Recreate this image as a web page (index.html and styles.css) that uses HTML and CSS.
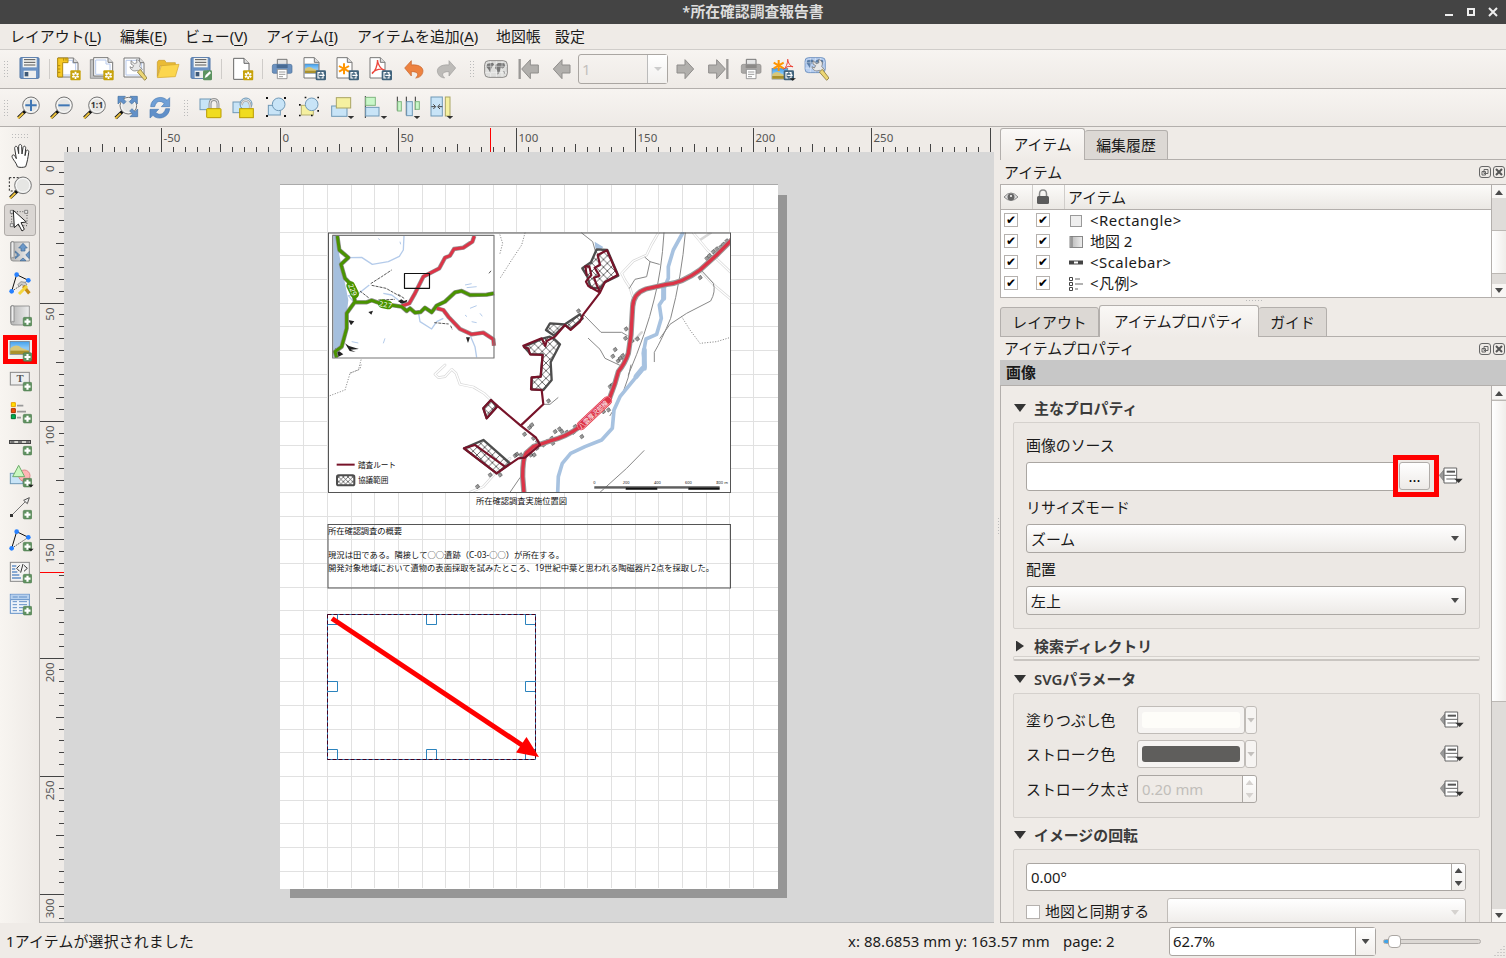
FILE: index.html
```html
<!DOCTYPE html>
<html lang="ja">
<head>
<meta charset="utf-8">
<title>*所在確認調査報告書</title>
<link rel="stylesheet" href="styles.css">
</head>
<body>
<svg class="defs" width="0" height="0" aria-hidden="true">
  <defs>
    <pattern id="hatch" width="23" height="23" patternUnits="userSpaceOnUse"><path d="M0 0L23 23M23 0L0 23" stroke="#333" stroke-width="2.200"/></pattern>
    <pattern id="hatch-fine" width="14" height="14" patternUnits="userSpaceOnUse"><path d="M0 0L14 14M14 0L0 14" stroke="#333" stroke-width="2"/></pattern>
    <linearGradient id="sheet" x1="0" x2="1"><stop offset="0" stop-color="#b5b5b5"/><stop offset="1" stop-color="#eee"/></linearGradient>
    <linearGradient id="photo" x1="0" x2="0" y1="0" y2="1"><stop offset="0" stop-color="#3f9fee"/><stop offset=".5" stop-color="#8cc8f4"/></linearGradient>
  </defs>
  <symbol id="star-badge" viewBox="0 0 72 72"><rect x="40" y="40" width="31" height="30" rx="3" fill="#c7a20a"/><path d="M55.500 44v22M46 49.500l19 11M65 49.500l-19 11" stroke="#fff" stroke-width="5.500"/><circle cx="55.500" cy="55" r="3.500" fill="#c7a20a"/></symbol>
  <symbol id="export-badge" viewBox="0 0 72 72"><rect x="38" y="40" width="31" height="30" rx="4" fill="#41637c"/><path d="M52 47h-7v16h7M55 47h5v4M55 63h5v-4M49 55h13" fill="none" stroke="#fff" stroke-width="3.500"/><path d="M59 49l7 6-7 6z" fill="#fff"/></symbol>
  <symbol id="plus-badge" viewBox="0 0 72 72"><rect x="45.500" y="40" width="26" height="26" rx="4" fill="#5f9160" stroke="#48764a" stroke-width="1.500"/><path d="M58.500 44v18M49.500 53h18" stroke="#fff" stroke-width="6.500"/></symbol>
  <symbol id="down" viewBox="0 0 72 72"><path d="M53 60h20l-10 9z" fill="#333"/></symbol>
  <symbol id="paper" viewBox="0 0 72 72"><path d="M3 2h31l14 14v47H3z" fill="#fff" stroke="#777" stroke-width="3"/><path d="M34 2v14h14" fill="#ddd" stroke="#777" stroke-width="3"/></symbol>
  <symbol id="floppy" viewBox="0 0 72 72"><rect x="9" y="2" width="57" height="62" rx="3" fill="#6c93c5" stroke="#4e74a5" stroke-width="3"/><rect x="17" y="3" width="42" height="28" fill="#f3f3f0"/><path d="M21 8h34M21 16h34M21 24h34" stroke="#555" stroke-width="3"/><rect x="20" y="41" width="37" height="22" fill="#eee"/><rect x="23" y="45" width="11" height="13" fill="#3d5877"/></symbol>
  <symbol id="wide-paper" viewBox="0 0 72 72"><path d="M3 3h46l14 14v43H3z" fill="#fff" stroke="#777" stroke-width="3"/><path d="M9 10h38v8h9v36H9z" fill="#fff" stroke="#b8caec" stroke-width="3"/><path d="M49 3v14h14" fill="#ddd" stroke="#777" stroke-width="3"/></symbol>
  <symbol id="wrench" viewBox="0 0 72 72"><path d="M24 11l10 9 8-3-2-9c11 1 15 11 10 20L58 37l-8 8-7-5c-10 5-21-1-22-11l7 4 4-7-8-5z" fill="#e8e8e8" stroke="#666" stroke-width="2"/><path d="M52 37l20 26-7 7-22-25z" fill="#ecd675" stroke="#8a7a3b" stroke-width="2.500"/></symbol>
  <symbol id="photo-pic" viewBox="0 0 72 72"><rect x="6" y="4" width="58" height="39" fill="url(#photo)" stroke="#777" stroke-width="2"/><path d="M7 25Q24 9 41 24L63 32V42H7z" fill="#d8c778"/><path d="M7 32h56v10H7z" fill="#aa912c"/></symbol>
  <symbol id="printer" viewBox="0 0 72 72"><path d="M22 7h29v20H22z" fill="#e5e5e5" stroke="#777" stroke-width="3"/><path d="M7 27q0-5 6-5h47q6 0 6 5v18q0 4-5 4H12q-5 0-5-4z" fill="var(--ink,#6b91bf)" stroke="var(--edge,#4c6f98)" stroke-width="2"/><path d="M20 23h33v10H20z" fill="var(--edge,#486b94)"/><path d="M22 37h29v28H22z" fill="#fff" stroke="#888" stroke-width="2.500"/><path d="M27 45h19M27 52h19M27 59h12" stroke="#888" stroke-width="2.500"/></symbol>
  <symbol id="bigarrow" viewBox="0 0 72 72"><path d="M10 36L36 8v16h24v24H36v17z" fill="#b1afac" stroke="#8f8d8b" stroke-width="3"/></symbol>
  <symbol id="lens" viewBox="0 0 72 72"><path d="M30 43L7 65" stroke="#111" stroke-width="10"/><path d="M22 51L6 67" stroke="#eac03d" stroke-width="6"/><circle cx="45" cy="28" r="25" fill="#e6e6e4" stroke="#777" stroke-width="3"/><circle cx="45" cy="28" r="20.500" fill="none" stroke="#fafafa" stroke-width="3"/></symbol>
  <symbol id="padlock" viewBox="0 0 72 72"><path d="M36 42V24q0-13 12-13t12 13v18" fill="none" stroke="#777" stroke-width="8"/><path d="M36 42V24q0-13 12-13t12 13v18" fill="none" stroke="#ddd" stroke-width="4"/><rect x="26" y="38" width="43" height="27" rx="2" fill="#f0dc20" stroke="#b99c00" stroke-width="3"/></symbol>
  <symbol id="corners" viewBox="0 0 72 72"><path d="M6 3h6v6H6zM60 3h6v6h-6zM6 57h6v6H6zM60 57h6v6h-6z" fill="#111"/></symbol>
  <symbol id="mapsheet" viewBox="0 0 72 72"><path d="M8 7q4-5 10-1h46v57H15q-7 0-7-8z" fill="url(#sheet)" stroke="#888" stroke-width="2.500"/><path d="M9 8v47q4-5 9-1V7q-5-4-9 1z" fill="#eee" stroke="#888" stroke-width="2.500"/></symbol>
  <symbol id="nodes" viewBox="0 0 72 72"><path d="M11 58L26 8L61 25" fill="none" stroke="#111" stroke-width="3"/><path d="M61 25L11 58" stroke="#111" stroke-width="3" stroke-dasharray="3 4"/><circle cx="26" cy="8" r="7" fill="#2680ff"/><circle cx="61" cy="25" r="7" fill="#2680ff"/><circle cx="11" cy="58" r="7" fill="#2680ff"/></symbol>
  <symbol id="override" viewBox="0 0 72 60"><path d="M15 8L1 25l14 18z" fill="#999" stroke="#777" stroke-width="2"/><path d="M15 3h38v45H15z" fill="#fff" stroke="#666" stroke-width="3"/><path d="M23 14h25" stroke="#555" stroke-width="6"/><path d="M16 25h37M22 36h28" stroke="#666" stroke-width="3"/><path d="M46 35h25L59 48z" fill="#333"/></symbol>
  <symbol id="globe-map" viewBox="0 0 72 72"><rect x="2" y="11" width="68" height="50" rx="12" fill="var(--sea,#dededc)" stroke="var(--edge,#8b8987)" stroke-width="3"/><path d="M10 20l17-3 3 6-8 10-3 15-5-10-7-9zM35 23l8-5 18 1 3 9-9 7-5-4-3 14-6 8-2-14-6-5zM56 43l7 1v7z" fill="var(--land,#777)"/><path d="M20 12v48M37 12v48M54 12v48M3 28h66M3 46h66" stroke="#fff" opacity=".65" stroke-width="2"/></symbol>
  <symbol id="pdf" viewBox="0 0 72 72"><path d="M25 9q4 24 21 31M26 9q-2 29-17 41M9 48q17-16 38-10" fill="none" stroke="#ec463c" stroke-width="4"/></symbol>
  <symbol id="asterisk" viewBox="0 0 72 72"><path d="M24 19v33M9 27l30 17M39 27L9 44" stroke="#ff9500" stroke-width="6"/></symbol>
</svg>

<div class="window">
  <header class="titlebar"><h1>*所在確認調査報告書</h1>
    <svg class="window-controls" viewBox="0 0 66 24"><path d="M5 15h8" stroke="#eee" stroke-width="2"/><rect x="28" y="9" width="6" height="6" fill="none" stroke="#eee" stroke-width="2"/><path d="M49 8l8 8M57 8l-8 8" stroke="#eee" stroke-width="2"/></svg>
  </header>
  <nav class="menubar"><span>レイアウト(<u>L</u>)</span><span>編集(<u>E</u>)</span><span>ビュー(<u>V</u>)</span><span>アイテム(<u>I</u>)</span><span>アイテムを追加(<u>A</u>)</span><span>地図帳</span><span>設定</span></nav>

  <div class="toolbar toolbar-main">
    <i class="grip"></i>
    <svg class="tool"><use href="#floppy"/></svg><i class="sep"></i>
    <svg class="tool" viewBox="0 0 72 72"><use href="#wide-paper"/><path d="M2 3h31v14H17v43H2z" fill="#f6c823" stroke="#b28b10" stroke-width="3"/><path d="M3 26h7M3 36h7M3 46h7M20 4v7M27 4v7" stroke="#8b6a00" stroke-width="2"/><use href="#star-badge"/></svg>
    <svg class="tool" viewBox="0 0 72 72"><path d="M1 8h12v47h44v9H1z" fill="#c3c3c3" stroke="#777" stroke-width="2"/><path d="M11 2h43l14 14v41H11z" fill="#fff" stroke="#777" stroke-width="3"/><path d="M17 9h31v12h12v31H17z" fill="none" stroke="#b8caec" stroke-width="3"/><path d="M54 2v14h14" fill="#ddd" stroke="#777" stroke-width="3"/><use href="#star-badge"/></svg>
    <svg class="tool" viewBox="0 0 72 72"><use href="#wide-paper"/><use href="#wrench"/></svg>
    <svg class="tool" viewBox="0 0 72 72"><path d="M4 59V15l4-5h18l5 7h27v9H13z" fill="#eabb35" stroke="#c59a29" stroke-width="2"/><path d="M16 26l53-4-11 37-54 3z" fill="#fcd64d" stroke="#d2a42d" stroke-width="2"/></svg>
    <svg class="tool" viewBox="0 0 72 72"><use href="#floppy" transform="translate(-3 0)"/><rect x="42" y="40" width="27" height="30" rx="4" fill="#5c9360"/><path d="M47 63l3-9 12-11 4 5-12 12z" fill="#fff"/></svg><i class="sep sep-wide"></i>
    <svg class="tool" viewBox="0 0 72 72"><path d="M11 4h31l15 15v48H11z" fill="#fff" stroke="#666" stroke-width="3"/><path d="M42 4v15h15" fill="#ddd" stroke="#666" stroke-width="3"/><use href="#star-badge" transform="translate(-1 0)"/></svg><i class="sep"></i>
    <svg class="tool"><use href="#printer"/></svg>
    <svg class="tool" viewBox="0 0 72 72"><use href="#paper"/><use href="#photo-pic" transform="translate(1 18) scale(.72)"/><use href="#export-badge"/></svg>
    <svg class="tool" viewBox="0 0 72 72"><use href="#paper"/><use href="#asterisk"/><use href="#export-badge"/></svg>
    <svg class="tool" viewBox="0 0 72 72"><use href="#paper"/><use href="#pdf"/><use href="#export-badge"/></svg>
    <svg class="tool" viewBox="0 0 72 72"><path d="M8 33L28 11v13c26-3 42 11 32 28-4 7-10 10-19 11 10-8 9-20-13-19v13z" fill="#ed8240" stroke="#c66027" stroke-width="2"/></svg>
    <svg class="tool" viewBox="0 0 72 72"><path d="M62 33L42 11v13c-26-3-42 11-32 28 4 7 10 10 19 11-10-8-9-20 13-19v13z" fill="#bdbbb8" stroke="#9f9d9b" stroke-width="2"/></svg>
    <i class="grip grip-mid"></i>
    <svg class="tool"><use href="#globe-map"/></svg>
    <svg class="tool" viewBox="0 0 72 72"><path d="M8 6v60" stroke="#9a9896" stroke-width="7"/><use href="#bigarrow" transform="translate(4 0)"/></svg>
    <svg class="tool"><use href="#bigarrow"/></svg>
    <div class="page-combo"><span>1</span><b><svg viewBox="0 0 8 5"><path d="M0 0h8L4 4z" fill="#ccc"/></svg></b></div>
    <svg class="tool flip"><use href="#bigarrow"/></svg>
    <svg class="tool flip" viewBox="0 0 72 72"><path d="M8 6v60" stroke="#9a9896" stroke-width="7"/><use href="#bigarrow" transform="translate(4 0)"/></svg>
    <svg class="tool disabled-printer"><use href="#printer"/></svg>
    <svg class="tool" viewBox="0 0 72 72"><use href="#photo-pic" transform="translate(-5 31) scale(.82)"/><use href="#asterisk" transform="translate(-4 -10)"/><use href="#pdf" transform="translate(28 0) scale(.75)"/><use href="#export-badge" transform="translate(-3 0)"/><path d="M52 64h20l-10 7z" fill="#222"/></svg>
    <svg class="tool blue-map" viewBox="0 0 72 72"><use href="#globe-map" transform="translate(-2 -8) scale(.9)"/><use href="#wrench"/></svg>
  </div>

  <div class="toolbar toolbar-view">
    <i class="grip"></i>
    <svg class="tool" viewBox="0 0 72 72"><use href="#lens"/><path d="M45 11v34M28 28h34" stroke="#3f77b5" stroke-width="6"/></svg>
    <svg class="tool" viewBox="0 0 72 72"><use href="#lens"/><path d="M28 28h34" stroke="#3f77b5" stroke-width="6"/></svg>
    <svg class="tool" viewBox="0 0 72 72"><use href="#lens"/><text x="45" y="37" font-size="26" text-anchor="middle" class="one">1:1</text></svg>
    <svg class="tool" viewBox="0 0 72 72"><use href="#lens" transform="translate(-5 1)"/><path d="M9 1h22l-6 7 8 9-7 7-9-8-8 8zM67 1v23l-8-8-9 8-7-7 9-9-7-7zM68 62H45l8-8-9-9 7-7 9 9 8-8z" fill="#6291c9" stroke="#43709f" stroke-width="2"/></svg>
    <svg class="tool" viewBox="0 0 72 72"><path d="M8 32C9 3 45-3 57 13l8-8v27H40l9-9C38 12 24 14 20 32z" fill="#6f9fd6" stroke="#4b7bb4" stroke-width="2"/><path d="M65 38C62 68 27 73 15 58l-9 8V40h26l-9 9c10 11 25 6 30-11z" fill="#5f8fc9" stroke="#4b7bb4" stroke-width="2"/></svg>
    <i class="grip grip-view"></i>
    <svg class="tool" viewBox="0 0 72 72"><rect x="6" y="9" width="32" height="32" fill="#c8e4f7" stroke="#6f98b6" stroke-width="3"/><use href="#padlock"/></svg>
    <svg class="tool" viewBox="0 0 72 72"><rect x="6" y="18" width="25" height="32" fill="#c8e4f7" stroke="#6f98b6" stroke-width="3"/><circle cx="45" cy="24" r="18" fill="#c8e4f7" stroke="#6f98b6" stroke-width="3"/><path d="M32 27q2-15 15-13t10 28" fill="none" stroke="#999" stroke-width="7"/><path d="M32 27q2-15 15-13t10 28" fill="none" stroke="#ddd" stroke-width="4"/><rect x="26" y="38" width="41" height="27" fill="#f0dc20" stroke="#b99c00" stroke-width="3"/></svg>
    <svg class="tool" viewBox="0 0 72 72"><rect x="13" y="28" width="36" height="29" fill="#c8e4f7" stroke="#6f98b6" stroke-width="3"/><circle cx="44" cy="25" r="19" fill="#c8e4f7" stroke="#6f98b6" stroke-width="3"/><use href="#corners"/></svg>
    <svg class="tool" viewBox="0 0 72 72"><rect x="13" y="28" width="36" height="29" fill="#f5f0a0" stroke="#b6b170" stroke-width="3"/><circle cx="44" cy="25" r="19" fill="#c8e4f7" stroke="#6f98b6" stroke-width="3"/><path d="M6 24h5v5H6zM23 2h5v5h-5zM61 2h5v5h-5zM61 42h5v5h-5zM6 56h5v5H6zM42 56h5v5h-5z" fill="#111"/></svg>
    <svg class="tool" viewBox="0 0 72 72"><rect x="5" y="30" width="46" height="31" fill="#c8e4f7" stroke="#6f98b6" stroke-width="3"/><rect x="19" y="5" width="43" height="31" fill="#f5f0a0" stroke="#aaa564" stroke-width="3"/><use href="#down"/></svg>
    <svg class="tool" viewBox="0 0 72 72"><path d="M7 0v66" stroke="#333" stroke-width="3"/><rect x="8" y="4" width="29" height="24" fill="#c9f7c9" stroke="#80b680" stroke-width="3"/><rect x="8" y="34" width="40" height="26" fill="#c8e4f7" stroke="#6f98b6" stroke-width="3"/><use href="#down"/></svg>
    <svg class="tool" viewBox="0 0 72 72"><path d="M4 2v42M31 2v56M58 2v40" stroke="#333" stroke-width="3"/><rect x="5" y="17" width="11" height="28" fill="#c9f7c9" stroke="#80b680" stroke-width="3"/><rect x="32" y="17" width="17" height="42" fill="#c8e4f7" stroke="#6f98b6" stroke-width="3"/><rect x="58" y="17" width="12" height="23" fill="#c9f7c9" stroke="#80b680" stroke-width="3"/><use href="#down"/></svg>
    <svg class="tool" viewBox="0 0 72 72"><rect x="6" y="3" width="34" height="57" fill="#c8e4f7" stroke="#6f98b6" stroke-width="3"/><rect x="49" y="3" width="14" height="57" fill="#f5f0a0" stroke="#aaa564" stroke-width="3"/><path d="M7 32h12M13 25l7 7-7 7M40 32H28M33 25l-7 7 7 7" fill="none" stroke="#444" stroke-width="3"/><use href="#down"/></svg>
  </div>

  <main class="workspace">
    <aside class="toolbox"><i class="grip grip-h"></i>
      <span><svg viewBox="0 0 72 72"><path d="M28 68c-3-14-20-27-15-34 6-5 9 5 12 10L20 13c0-8 7-8 9-1l3 17V7c1-8 9-7 9 0l1 23 3-19c2-7 9-5 8 2l-2 22 3-13c3-7 10-3 8 4-2 15-4 27-9 42-6 3-21 3-25 0z" fill="#fff" stroke="#333" stroke-width="3"/></svg></span>
      <span><svg viewBox="0 0 72 72"><path d="M4 5h40v40H4z" fill="none" stroke="#222" stroke-width="3" stroke-dasharray="6 5"/><use href="#lens"/></svg></span>
      <span class="active"><svg viewBox="0 0 72 72"><path d="M11 11h46v42H11z" fill="none" stroke="#555" stroke-width="3" stroke-dasharray="3 5"/><path d="M7 7h9v9H7zM50 7h9v9h-9zM7 47h9v9H7z" fill="#eee" stroke="#555" stroke-width="2"/><path d="M16 7l39 35-16 2 10 20-7 5-11-21-12 11z" fill="#fff" stroke="#222" stroke-width="3"/></svg></span>
      <span><svg viewBox="0 0 72 72"><use href="#mapsheet"/><path d="M45 10L32 24h7v9h12v-9h7zM22 33v6h5v11h-5v6l13-11zM64 34v22l-11-11zM45 54l9 8H36z" fill="#6b98c9" stroke="#3e6793" stroke-width="2"/></svg></span>
      <span><svg viewBox="0 0 72 72"><use href="#nodes"/><path d="M29 38l10-9 13 2 5 8-9 3-8-5-5 7z" fill="#ccc" stroke="#777" stroke-width="2"/><path d="M46 42l18 22" stroke="#c68b13" stroke-width="10"/><path d="M57 42L33 66" stroke="#f3d53c" stroke-width="9"/></svg></span>
      <span><svg viewBox="0 0 72 72"><use href="#mapsheet"/><use href="#plus-badge"/></svg></span>
      <span class="highlight"><svg viewBox="0 0 72 72"><use href="#photo-pic"/><use href="#plus-badge" transform="translate(0 -2)"/></svg></span>
      <span><svg viewBox="0 0 72 72"><rect x="7" y="10" width="57" height="38" fill="#eee" stroke="#888" stroke-width="3"/><text x="36" y="40" text-anchor="middle" class="serif" font-size="32">T</text><use href="#plus-badge"/></svg></span>
      <span><svg viewBox="0 0 72 72"><path d="M10 5h12v12H10z" fill="#ffe000" stroke="#e89f00" stroke-width="3"/><path d="M10 23h12v12H10z" fill="#f24b08" stroke="#a72f00" stroke-width="3"/><path d="M10 41h12v12H10z" fill="#00b050" stroke="#006b30" stroke-width="3"/><path d="M27 14h19M27 32h27M27 50h12" stroke="#999" stroke-width="5"/><use href="#plus-badge"/></svg></span>
      <span><svg viewBox="0 0 72 72"><path d="M3 27h66" stroke="#444" stroke-width="12"/><path d="M6 27h60" stroke="#f2f2eb" stroke-width="5"/><path d="M7 27h12M30 27h12M54 27h11" stroke="#777" stroke-width="6"/><use href="#plus-badge"/></svg></span>
      <span><svg viewBox="0 0 72 72"><rect x="7" y="25" width="38" height="31" fill="#c8e4f7" stroke="#6f98b6" stroke-width="3"/><circle cx="49" cy="32" r="17" fill="#ffb5b5" stroke="#d88" stroke-width="3"/><path d="M32 1L14 35h36z" fill="#c9f7c0" stroke="#6fac6c" stroke-width="3"/><use href="#plus-badge"/><path d="M60 59h17l-8 8z" fill="#222"/></svg></span>
      <span><svg viewBox="0 0 72 72"><path d="M11 55L57 9" stroke="#777" stroke-width="3"/><path d="M64 2L47 10l11 10z" fill="#eee" stroke="#555" stroke-width="3"/><path d="M6 51h9v9H6z" fill="#333"/><use href="#plus-badge"/></svg></span>
      <span><svg viewBox="0 0 72 72"><use href="#nodes"/><use href="#plus-badge"/><path d="M60 59h17l-8 8z" fill="#222"/></svg></span>
      <span><svg viewBox="0 0 72 72"><rect x="7" y="4" width="57" height="57" fill="#f3f3f3" stroke="#888" stroke-width="3"/><path d="M12 15h13M12 24h10M12 33h16M12 42h22M12 51h27" stroke="#6491c8" stroke-width="5"/><path d="M35 13l-9 9 9 9M48 13l10 9-10 9M45 9l-7 26" fill="none" stroke="#333" stroke-width="3"/><use href="#plus-badge"/></svg></span>
      <span><svg viewBox="0 0 72 72"><rect x="7" y="4" width="57" height="57" fill="#eef3f9" stroke="#6491c8" stroke-width="3"/><rect x="8" y="5" width="55" height="15" fill="#b6d0ee"/><path d="M14 12h15M33 12h24M14 26h13M33 26h24M14 35h13M33 35h24M14 44h13M33 44h14M14 53h13M33 53h10M8 20h55" stroke="#6491c8" stroke-width="3"/><use href="#plus-badge"/></svg></span>
    </aside>

    <svg class="canvas" viewBox="40 127 954 796">
      <rect x="40" y="127" width="954" height="796" fill="#efebe7"/>
      <rect x="64" y="152" width="930" height="771" fill="#d7d7d7"/>
      <rect x="290" y="195" width="497" height="703" fill="#969696"/>
      <rect x="280" y="184" width="498" height="705" fill="#fff"/>
      <path id="grid" stroke="#e1e1e1"/>
      <path d="M280 184.500H778" stroke="#aaa"/>
      <path id="ticks" stroke="#444"/>
      <g id="ruler-labels"></g>
      <path d="M490.500 128V152M40 572.500H64" stroke="red"/>

      <rect x="328.500" y="233" width="402" height="259.500" fill="#fff"/>
      <svg class="map" x="328" y="232" width="403" height="261" viewBox="328 232 403 261">
        <g transform="translate(500 225) scale(.3333)" fill="none" stroke-linejoin="round" stroke-linecap="round">
          <path d="M475 24L454 60 440 90 400 108 365 145 375 165 390 188 398 215M580 24L622 75 692 142M600 135L642 180 692 222M632 24L600 45M-165 420L-195 448-185 458-165 455-145 433-132 445-120 478-80 486-48 505-27 525M-90 802L-50 785-10 740 30 700M425 322L398 350" stroke="#d8d8d8" stroke-width="8"/>
          <path d="M475 24L454 60 440 90 400 108 365 145 375 165 390 188 398 215M580 24L622 75 692 142M600 135L642 180 692 222M-165 420L-195 448-185 458-165 455-145 433-132 445-120 478-80 486-48 505-27 525M-90 802L-50 785-10 740 30 700" stroke="#fff" stroke-width="4"/>
          <path d="M245 24L278 50 286 78M435 97L450 110 478 118M450 110L440 155 405 163 388 190M492 24Q485 140 462 225Q440 320 385 450M393 420Q380 500 330 572M556 24Q545 155 512 280Q485 345 463 382L463 410M480 340L510 298 560 265 632 228Q648 200 640 175L600 132M250 268L303 322 365 322 382 332M265 340L300 373 315 400 362 422M130 538L150 538 174 518M432 677L380 730 300 802M60 758L30 802" stroke="#888" stroke-width="3"/>
          <path d="M545 275L570 315 600 355 650 350 692 337M0 30L8 55 0 85M75 24L65 60 35 105 0 160M-417 420L-420 432-450 445-465 495-510 512M-417 180L-425 200-452 210" stroke="#888" stroke-width="3" stroke-dasharray="1 7"/>
          <path d="M-417 405L-425 435-452 445" stroke="#888" stroke-width="3" stroke-dasharray="1 7"/>
          <path d="M284 50l26 16-8 8-16-4z" fill="#a7c2e0"/>
          <path d="M548 24L520 75 505 125 505 160 492 190 490 222 478 240 484 280 470 328 438 342 430 385 435 425 405 460 360 515 342 555 337 610 305 645 255 665 212 685 187 715 175 755 173 805" stroke="#a7c2e0" stroke-width="11"/>
          <path d="M491 190v30M433 375v55M428 430l-20 25" stroke="#a7c2e0" stroke-width="15"/>
          <path id="houses" stroke="#333" stroke-width="1.500" fill="#999"/>
          <path d="M695 45L650 90 600 135Q545 175 500 178L438 192Q400 205 398 245L393 330 385 385Q375 415 355 440L345 475 325 530 240 605Q200 635 150 648L100 665 78 685Q68 700 68 755L72 805" stroke="#999" stroke-width="16"/>
          <path d="M695 45L650 90 600 135Q545 175 500 178L438 192Q400 205 398 245L393 330 385 385Q375 415 355 440L345 475 325 530 240 605Q200 635 150 648L100 665 78 685Q68 700 68 755L72 805" stroke="#dc3447" stroke-width="10"/>
          <path d="M243 602L323 527" stroke="#dc3447" stroke-width="27"/><path d="M243 602L323 527" stroke="#ff9ea8" stroke-width="23"/><path d="M243 602L323 527" stroke="#dc3447" stroke-width="20"/>
          <text transform="translate(244 613) rotate(-43)" font-size="20" textLength="112" lengthAdjust="spacingAndGlyphs" fill="#fff" stroke="none">八雲厚沢部線</text>
          <path d="M290 73L322 75 355 152 315 172 300 190 272 188 262 155 247 130 273 112zM150 295L195 298 240 268 248 280 212 312 195 300 162 332 138 315zM130 340L150 335 163 342 180 358 152 412 155 465 130 495 95 493 95 458 122 455 128 388 92 388 72 365zM-27 525L-10 545-40 580-50 550zM-50 645L30 715-10 745-108 670z" fill="url(#hatch)" stroke="#4d4d4d" stroke-width="7"/>
          <path d="M300 203L265 183 258 170 265 160 274 151 268 124 256 124 260 150M321 76L293 90 300 120 284 128 298 152 282 158 290 180 300 200M321 76L353 150 315 171 300 203 250 268 240 290 212 315 195 300 165 335 140 348 136 363 125 340 70 362 74 368 85 370 90 388 128 390 122 455 95 457 93 493 125 495 130 538 62 602M-40 580L-50 550-27 525-5 545 62 602 108 638 120 660 75 698 55 700-10 745-108 670-75 660 15 725M-40 580L-10 547" stroke="#771329" stroke-width="6.500"/>
        </g>
        <g transform="translate(500 365) scale(.3333)"><path d="M283 367H659" stroke="#555" stroke-width="6"/><path d="M283 370H377M472 370H565" stroke="#888" stroke-width="3"/><path d="M377 371H472M565 371H659" stroke="#111" stroke-width="6"/>
          <g font-size="12" fill="#222"><text x="280" y="357">0</text><text x="368" y="357">200</text><text x="462" y="357">400</text><text x="555" y="357">600</text><text x="649" y="357">800 m</text></g></g>
        <g transform="translate(320 225) scale(.3333)" fill="none" stroke-linejoin="round">
          <rect x="38" y="31" width="484" height="368" fill="#fff"/>
          <path d="M40 33h12L58 90 64 120 76 180 85 225 78 290 68 360 40 398z" fill="#a5bfdd"/>
          <path d="M85 98L125 97 157 118 205 110 238 94 250 75 252 33M100 230L85 212 110 210 148 180M296 265L300 290 335 312 350 290 370 280M450 330L465 365 470 397M190 205l25 5 20 15" stroke="#b4cbea" stroke-width="4"/>
          <path d="M435 270l6 5M450 250l20-8M480 265l7 9M455 290l15 3M435 180l20-4M95 350l20 4M195 340l-5 15M175 40l4 5M240 50l2 8M440 188l30-3" stroke="#b4cbea" stroke-width="3"/>
          <path d="M152 176L185 155 215 135M155 181L198 190 242 215M120 198l28 22M235 228l25 10M343 293l43 4M392 302l5 12M507 145l8-10M75 160l12 18M175 225l50-2M235 208l20 14" stroke="#555" stroke-width="3" stroke-dasharray="9 3"/>
          <path d="M235 228l9-5 8 5 10-4-5 16-15-5zM145 261l14-4-5 12zM438 337h12l-6 17zM75 355l12 8 30 9-25 2 15 7-18-3zM85 285l18 4-10 12zM45 370l15 10 10 8-20 10z" fill="#222"/>
          <path d="M52 33L58 75 85 98 63 118 75 160 95 180 105 230 80 265 80 310 65 365 45 380 50 398M105 232L140 232 155 226 180 235 245 245 260 258 270 250 285 263 302 261 315 248 335 262 350 242 375 230 405 202 425 198 450 210 500 209 522 205" stroke="#8c8c8c" stroke-width="13"/>
          <path d="M463 33L457 50 430 68 402 72 390 92 375 98 358 130 310 155 285 205 268 235 245 243M350 250L370 255 385 275 420 312 455 328 490 323 520 343 522 362" stroke="#999" stroke-width="13"/>
          <path d="M463 33L457 50 430 68 402 72 390 92 375 98 358 130 310 155 285 205 268 235 245 243M350 250L370 255 385 275 420 312 455 328 490 323 520 343 522 362" stroke="#dc3447" stroke-width="9"/>
          <path d="M52 33L58 75 85 98 63 118 75 160 95 180 105 230 80 265 80 310 65 365 45 380 50 398M105 232L140 232 155 226 180 235 245 245 260 258 270 250 285 263 302 261 315 248 335 262 350 242 375 230 405 202 425 198 450 210 500 209 522 205" stroke="#4a9300" stroke-width="9"/>
          <path d="M92 182L104 207M187 236L205 240" stroke="#4a9300" stroke-width="26" stroke-linecap="round"/>
          <g fill="#fff" font-size="21"><text transform="translate(84 181) rotate(67)" textLength="36">229</text><text transform="translate(176 243) rotate(10)" textLength="39">227</text></g>
          <rect x="253.500" y="145.500" width="75" height="44.500" stroke="#111" stroke-width="3.500"/>
          <rect x="38" y="31" width="484" height="368" stroke="#777" stroke-width="3.500"/>
          <path d="M50 719H104" stroke="#771329" stroke-width="6"/><rect x="51" y="751" width="52" height="30" rx="5" fill="url(#hatch-fine)" stroke="#4d4d4d" stroke-width="6"/>
          <g fill="#111" font-size="23"><text x="114" y="729" textLength="114">踏査ルート</text><text x="114" y="774" textLength="91">協議範囲</text></g>
        </g>
      </svg>
      <g class="paper-text">
        <text x="476" y="504" textLength="91">所在確認調査実施位置図</text>
        <text x="328" y="534.300" textLength="74">所在確認調査の概要</text>
        <text x="328" y="558.300" textLength="236">現況は田である。隣接して○○遺跡（C-03-○○）が所在する。</text>
        <text x="328" y="571.200" textLength="386">開発対象地域において遺物の表面採取を試みたところ、19世紀中葉と思われる陶磁器片2点を採取した。</text>
      </g>
      <g fill="none" stroke="#555"><rect x="328.500" y="233" width="402" height="259.500"/><rect x="328" y="524.500" width="402.500" height="63.500"/></g>
      <g fill="none" stroke="#2b83bd"><path d="M327.500 614.500h10v10h-10zM426.500 614.500h10v10h-10zM525.500 614.500h10v10h-10zM327.500 681.500h10v10h-10zM525.500 681.500h10v10h-10zM327.500 749.500h10v10h-10zM426.500 749.500h10v10h-10zM525.500 749.500h10v10h-10z"/><path d="M327.500 614.500h208v145h-208z"/><path d="M327.500 614.500h208v145h-208z" stroke="#48001f" stroke-dasharray="4 2"/></g>
      <path d="M332 618.500L524 746.500" stroke="red" stroke-width="5"/><path d="M539 757L526.500 737 516 752.500z" fill="red"/>
      <path d="M40 922.500H994" stroke="#bbb"/>
    </svg>
    <div class="splitter"></div>

    <aside class="panel">
      <div class="tabs"><span class="tab tab-on w84">アイテム</span><span class="tab w83">編集履歴</span></div>
      <div class="dock-title">アイテム<svg viewBox="0 0 26 12"><path d="M3 .5h6q2.500 0 2.500 2.500v6q0 2.500-2.500 2.500H3Q.5 11.500.5 9V3Q.5.500 3 .500zM17 .500h6q2.500 0 2.500 2.500v6q0 2.500-2.500 2.500h-6q-2.500 0-2.500-2.500V3Q14.500.500 17 .500zM5 3.500h4v4H5zM3 5.500h3.500V9H3z" fill="none" stroke="#666"/><path d="M17 3l6 6M23 3l-6 6" stroke="#555" stroke-width="2"/></svg></div>
      <div class="tree-wrap">
        <div class="tree">
          <div class="tree-head"><span><svg width="16" height="12" viewBox="0 0 16 12"><path d="M1 6q7-8 14 0-7 7-14 0z" fill="#ddd" stroke="#888"/><circle cx="8" cy="6" r="3.500" fill="#666"/><circle cx="8" cy="5" r="1" fill="#fff"/></svg></span><span><svg width="12" height="16" viewBox="0 0 12 16"><path d="M2.500 8V5q0-4 3.500-4t3.500 4v3" fill="none" stroke="#888" stroke-width="1.500"/><rect y="7" width="12" height="8" rx="1.500" fill="#5b5b5b"/></svg></span><span>アイテム</span></div>
          <div class="row"><i class="check">✔</i><i class="check">✔</i><svg viewBox="0 0 14 14"><rect x="1.500" y="1.500" width="11" height="11" fill="#eee" stroke="#999"/></svg><span class="latin-wide">&lt;Rectangle&gt;</span></div>
          <div class="row"><i class="check">✔</i><i class="check">✔</i><svg viewBox="0 0 14 14"><rect x="1" y="1.500" width="12.500" height="11" fill="url(#sheet)" stroke="#888"/><path d="M3 1v11" stroke="#777"/></svg><span>地図 2</span></div>
          <div class="row"><i class="check">✔</i><i class="check">✔</i><svg viewBox="0 0 14 14"><path d="M0 6.500h14" stroke="#444" stroke-width="4"/><path d="M5 6.500h4" stroke="#fff" stroke-width="2"/></svg><span class="latin-wide">&lt;Scalebar&gt;</span></div>
          <div class="row"><i class="check">✔</i><i class="check">✔</i><svg viewBox="0 0 14 14"><path d="M.5.500h3v3h-3zM.5 5.500h3v3h-3zM.5 10.500h3v3h-3z" fill="#fff" stroke="#444"/><path d="M6 2h5M6 7h8M6 12h3" stroke="#999" stroke-width="1.500"/></svg><span class="latin-wide">&lt;凡例&gt;</span></div>
        </div>
        <div class="scroll scroll-tree"><b class="up"></b><i></i><b class="dn"></b></div>
      </div>
      <div class="handle"></div>
      <div class="tabs tabs-low"><span class="tab w99">レイアウト</span><span class="tab tab-on w160">アイテムプロパティ</span><span class="tab w68">ガイド</span></div>
      <div class="dock-title dock-low">アイテムプロパティ<svg viewBox="0 0 26 12"><path d="M3 .5h6q2.500 0 2.500 2.500v6q0 2.500-2.500 2.500H3Q.5 11.500.5 9V3Q.5.500 3 .500zM17 .500h6q2.500 0 2.500 2.500v6q0 2.500-2.500 2.500h-6q-2.500 0-2.500-2.500V3Q14.500.500 17 .500zM5 3.500h4v4H5zM3 5.500h3.500V9H3z" fill="none" stroke="#666"/><path d="M17 3l6 6M23 3l-6 6" stroke="#555" stroke-width="2"/></svg></div>
      <h2 class="item-name">画像</h2>
      <div class="props">
        <div class="props-body">
          <h3><b class="open"></b>主なプロパティ</h3>
          <section class="box box-main">
            <label>画像のソース</label>
            <div class="source"><div class="field"></div><div class="pick"><button>...</button></div><svg class="override"><use href="#override"/></svg></div>
            <label>リサイズモード</label>
            <div class="combo">ズーム<b class="dn"></b></div>
            <label>配置</label>
            <div class="combo">左上<b class="dn"></b></div>
          </section>
          <h3 class="h-search"><b class="closed"></b>検索ディレクトリ</h3>
          <section class="box box-flat"></section>
          <h3 class="h-svg"><b class="open"></b>SVGパラメータ</h3>
          <section class="box box-svg">
            <div class="param"><label>塗りつぶし色</label><div class="color"><i class="white"></i></div><div class="color-more"><b class="dn"></b></div><svg class="override"><use href="#override"/></svg></div>
            <div class="param"><label>ストローク色</label><div class="color"><i></i></div><div class="color-more"><b class="dn"></b></div><svg class="override"><use href="#override"/></svg></div>
            <div class="param"><label>ストローク太さ</label><div class="spin disabled"><span>0.20 mm</span><em><b class="up"></b><b class="dn"></b></em></div><svg class="override"><use href="#override"/></svg></div>
          </section>
          <h3 class="h-rotate"><b class="open"></b>イメージの回転</h3>
          <section class="box box-rotate">
            <div class="spin"><span>0.00°</span><em><b class="up"></b><b class="dn"></b></em></div>
            <div class="sync"><i></i><span>地図と同期する</span><div class="combo faded"><b class="dn"></b></div></div>
          </section>
        </div>
        <div class="scroll scroll-props"><b class="up"></b><i></i><b class="dn"></b></div>
      </div>
    </aside>
  </main>
  <footer class="status"><span class="msg">1アイテムが選択されました</span><span class="coords">x: 88.6853 mm y: 163.57 mm</span><span class="page-no">page: 2</span><div class="zoom"><span>62.7%</span><em><b class="dn"></b></em></div><div class="slider"><i></i></div><svg class="size-grip" viewBox="0 0 12 12"><path d="M10 0v1M7 3v1M10 3v1M4 6v1M7 6v1M10 6v1M1 9v1M4 9v1M7 9v1M10 9v1" stroke="#aaa"/></svg></footer>
</div>
<script src="script.js"></script>
</body>
</html>
```

FILE: styles.css
```css
* { box-sizing: border-box; }
body { margin: 0; background: #efebe7; color: #1a1a1a; font: 15px/20px "Noto Sans", "Noto Sans CJK JP", sans-serif; overflow: hidden; }
i, em { font-style: normal; }
svg { display: block; overflow: visible; flex: none; }
.defs { position: absolute; }
.window { width: 1506px; height: 958px; display: flex; flex-direction: column; }

.titlebar { height: 24px; flex: none; background: #444; display: grid; grid-template-columns: 66px 1fr 66px; align-items: start; }
.titlebar h1 { grid-column: 2; margin: 0; text-align: center; font-size: 14.800px; line-height: 22px; font-weight: 600; color: #ddd; }
.window-controls { width: 66px; height: 24px; }
.menubar { height: 26px; flex: none; padding-left: 10px; display: grid; grid-template-columns: 110px 65px 81px 91px 139px 59px auto; line-height: 24px; border-bottom: 1px solid #d0cdca; white-space: nowrap; font-size: 14.900px; }
.menubar u { text-underline-offset: 3px; }

.toolbar { flex: none; display: flex; align-items: center; background: linear-gradient(#f7f4f1, #eeeae6); border-bottom: 1px solid #b3afac; }
.toolbar-main { height: 39px; }
.toolbar-view { height: 38px; }
.tool { width: 24px; height: 24px; margin: 0 4.500px; }
.flip { transform: scaleX(-1); }
.grip { width: 12px; height: 18px; flex: none; background: radial-gradient(circle, #bbb 0.700px, transparent 1px) 0 0 / 3px 3px; background-clip: content-box; padding: 0 2px 0 4px; }
.grip-mid { width: 16px; padding: 0 3px 0 7px; }
.toolbar-view .grip:first-child { width: 11.500px; }
.grip-view { width: 17px; padding: 0 4px 0 7px; }
.grip-h { width: 18px; height: 5px; padding: 0; }
.sep { width: 7px; height: 20px; flex: none; background: linear-gradient(90deg, transparent 4px, #cfccc9 4px, #cfccc9 5px, transparent 5px); }
.sep-wide { width: 8px; }
.one { font-weight: 700; fill: #333; }
.disabled-printer { --ink: #aaa8a6; --edge: #8b8987; }
.blue-map { --sea: #b7cef0; --edge: #6b8fbd; --land: #587ba5; }
.page-combo { width: 90px; height: 30px; border: 1px solid #aaa6a2; border-radius: 3px; display: flex; color: #c3c0bd; line-height: 28px; }
.page-combo span { flex: 1; padding-left: 3px; }
.page-combo b { width: 20px; border-left: 1px solid #bbb; background: linear-gradient(#fff, #f2f0ee); display: grid; place-items: center; }
.page-combo svg { width: 8px; height: 5px; }

.workspace { flex: 1; display: flex; min-height: 0; }
.toolbox { width: 40px; flex: none; border-right: 1px solid #b3afac; background: linear-gradient(90deg, #f8f5f1, #eeeae6); display: flex; flex-direction: column; align-items: center; padding-top: 6px; }
.toolbox span { width: 32px; height: 32.080px; flex: none; display: grid; place-items: center; }
.toolbox .grip-h + span { margin-top: 2px; }
.toolbox span svg { width: 24px; height: 24px; }
.toolbox .active { background: #dad6d3; border: 1px solid #b0aca9; border-radius: 3px; }
.toolbox .highlight { width: 34px; height: 29px; margin: 2.500px 0 0.600px; border: 5px solid red; }
.serif { font-family: "Liberation Serif", serif; font-weight: 700; fill: #555; }
.canvas { width: 954px; height: 796px; }
.canvas text { font-family: "Noto Sans", "Noto Sans CJK JP", sans-serif; }
.map { overflow: hidden; }
.paper-text { font-size: 8.300px; fill: #111; }
#ruler-labels text { font-size: 11.500px; fill: #555; }
.splitter { width: 6px; flex: none; background: radial-gradient(circle, #bbb 0.600px, transparent 1px) 0 0 / 3px 3px; background-clip: content-box; padding: 391px 1px 388px 2px; }

.panel { width: 506px; flex: none; display: flex; flex-direction: column; font-size: 14.900px; }
.tabs { height: 33px; flex: none; display: flex; align-items: flex-end; padding-top: 1px; box-shadow: inset 0 -1px #b3afac; }
.tab { height: 30px; background: #dcd8d4; border: 1px solid #b3afac; border-left-width: 0; border-radius: 3px 3px 0 0; text-align: center; line-height: 28px; white-space: nowrap; }
.tab-on { height: 32px; background: linear-gradient(#faf8f6, #efebe7); border-left-width: 1px; border-bottom: 0; line-height: 31px; }
.tabs-low .tab-on { line-height: 30px; }
.w84 { width: 85px; }
.w83 { width: 83px; }
.w99 { width: 99px; border-left-width: 1px; }
.w160 { width: 160px; }
.w68 { width: 68px; }
.dock-title { height: 24px; flex: none; padding: 0 1px 0 4px; display: flex; align-items: center; justify-content: space-between; line-height: 24px; }
.dock-title svg { width: 26px; height: 12px; }
.tree-wrap { height: 114px; flex: none; border: 1px solid #b3afac; border-right: 0; display: flex; background: #fff; }
.tree { flex: 1; }
.tree-head { height: 25px; border-bottom: 1px solid #b3afac; background: linear-gradient(#fcfbf9, #ebe8e4); display: flex; line-height: 25px; }
.tree-head span { width: 32px; border-right: 1px solid #d0cdca; padding: 0 2px; display: flex; align-items: center; }
.tree-head span:nth-child(2) { padding-left: 4px; }
.tree-head span:last-child { width: auto; border: 0; padding-left: 3px; }
.row { height: 21px; display: flex; align-items: center; line-height: 21px; padding-left: 3px; }
.row svg { width: 14px; height: 14px; margin-right: 7px; margin-left: 1px; }
.latin-wide { letter-spacing: 0.500px; }
.check { width: 14px; height: 14px; margin-right: 18px; margin-top: -1px; border: 1px solid #b5b1ae; background: #fff; font: 700 12px/12px "DejaVu Sans", sans-serif; text-align: center; color: #000; }
.up, .dn { display: block; width: 8px; height: 5px; background: #4a4a4a; clip-path: polygon(0 0, 100% 0, 50% 100%); flex: none; }
.up { clip-path: polygon(0 100%, 100% 100%, 50% 0); }
.scroll { width: 15px; flex: none; border-left: 1px solid #b3afac; background: #dfdcd9; display: flex; flex-direction: column; align-items: stretch; box-shadow: inset 0 13px #f8f6f4, inset 0 -13px #f8f6f4; }
.scroll .up, .scroll .dn { align-self: center; margin: 5px 0 4px; }
.scroll i { background: linear-gradient(90deg, #fff, #f0edea); border: 1px solid #bcb8b4; border-width: 1px 0; }
.scroll-tree i { margin: 31px 0 9px; flex: 1; }
.scroll-props i { height: 302px; margin: 0 0 auto; }
.handle { width: 18px; height: 3px; flex: none; margin: 1px 0 2px 245px; background: radial-gradient(circle, #bbb 0.600px, transparent 1px) 0 0 / 3px 3px; }
.dock-low { height: 23px; line-height: 22px; align-items: flex-start; }
.dock-low svg { margin-top: 6px; }
.item-name { height: 25px; flex: none; margin: 0; padding-left: 6px; background: #c7c7c7; font-size: 14.900px; line-height: 25px; }
.props { flex: 1; min-height: 0; display: flex; border: 1px solid #b3afac; border-right: 0; }
.props-body { flex: 1; padding: 12px 11px 0 12px; overflow: hidden; }
h3 { display: flex; align-items: center; gap: 8px; margin: 0; padding-left: 1px; height: 20px; font-size: 14.900px; font-weight: 600; color: #3b3b3b; line-height: 20px; }
.open { width: 12px; height: 8px; background: #333; clip-path: polygon(0 0, 100% 0, 50% 100%); }
.closed { width: 8px; height: 11px; margin: 0 2px; background: #333; clip-path: polygon(0 0, 100% 50%, 0 100%); }
.box { border: 1px solid #d5d1cd; border-radius: 2px; background: #ece8e4; padding: 0 13px 0 12px; }
.box-main { height: 207px; margin-top: 4px; padding-top: 12px; }
.box-main label { display: block; height: 20px; line-height: 20px; margin-bottom: 7px; }
.source { display: flex; height: 29px; margin-bottom: 6px; }
.field { width: 368px; border: 1px solid #aaa6a2; border-radius: 3px 0 0 3px; background: #fff; }
.pick { width: 46px; height: 42px; margin: -7px 0 0 -1px; border: 5px solid red; padding: 2px 4px 2px 1px; flex: none; }
.pick button { display: block; width: 31px; height: 28px; margin: 0; padding: 0; border: 1px solid #b0aca9; border-radius: 3px; background: linear-gradient(#fff, #edeae7); font: inherit; line-height: 26px; }
.override { width: 24px; height: 20px; }
.source .override { margin-top: 5px; }
.combo { height: 29px; margin-bottom: 6px; padding: 0 6px 0 4px; border: 1px solid #aaa6a2; border-radius: 3px; background: linear-gradient(#fff, #edeae7); display: flex; align-items: center; justify-content: space-between; line-height: 26px; }
.h-search { margin-top: 7px; }
.box-flat { height: 5px; margin-top: 0; background: #f1eeea; border-bottom: 2px solid #c9c5c1; }
.h-svg { margin-top: 8px; }
.box-svg { height: 125px; margin-top: 4px; padding-top: 12px; display: flex; flex-direction: column; gap: 6px; }
.param { height: 28px; display: grid; grid-template-columns: 111px 108px 12px 1fr; align-items: center; }
.param:last-child { margin-top: 1px; }
.param label { white-space: nowrap; }
.param .override { justify-self: end; margin: 2px 2px 0 0; }
.color { height: 28px; padding: 5px 4px; border: 1px solid #c0bcb8; border-radius: 3px; background: #f6f4f2; }
.color i { display: block; height: 16px; border-radius: 3px; background: #5f5e5c; }
.color .white { background: #fefdf9; }
.color-more { height: 28px; border: 1px solid #c0bcb8; border-radius: 3px; background: #f6f4f2; display: grid; place-items: center; }
.color-more .dn { background: #c3c0bd; }
.spin { height: 28px; border: 1px solid #aaa6a2; border-radius: 3px; background: #fff; display: flex; line-height: 26px; }
.spin span { flex: 1; padding-left: 4px; }
.spin em { width: 14px; border-left: 1px solid #aaa6a2; background: linear-gradient(#fff, #f2efec); display: flex; flex-direction: column; align-items: center; justify-content: space-around; border-radius: 0 3px 3px 0; }
.param .spin { grid-column: 2 / 4; }
.disabled { background: #efebe7; color: #c1beba; }
.disabled b { background: #d5d2cf; }
.h-rotate { margin-top: 7px; }
.box-rotate { height: 120px; margin-top: 4px; padding-top: 13px; }
.sync { display: flex; margin-top: 7px; height: 29px; align-items: flex-start; }
.sync i { width: 14px; height: 14px; border: 1px solid #b5b1ae; background: #fff; margin: 7px 5px 0 0; }
.sync span { width: 122px; white-space: nowrap; line-height: 27px; }
.sync .combo { flex: 1; margin: 0; }
.combo.faded { border-color: #c0bcb8; justify-content: flex-end; }
.faded b { background: #d5d2cf; }

.status { height: 35px; flex: none; display: flex; align-items: center; padding-left: 6px; line-height: 36px; font-size: 14.900px; white-space: nowrap; }
.msg { width: 842px; letter-spacing: 0.180px; }
.coords { width: 215px; letter-spacing: 0.060px; }
.page-no { width: 106px; }
.zoom { width: 207px; height: 29px; margin-top: 2px; border: 1px solid #aaa6a2; border-radius: 3px; background: #fff; display: flex; line-height: 26px; }
.zoom span { flex: 1; padding-left: 3px; }
.zoom em { width: 20px; border-left: 1px solid #aaa6a2; background: linear-gradient(#fff, #f2efec); display: grid; place-items: center; }
.slider { width: 98px; height: 5px; margin: 1px 0 0 7px; border: 1px solid #b0aca9; border-radius: 3px; background: linear-gradient(90deg, #42a4e8 6px, #dcd8d4 6px); display: flex; align-items: center; }
.slider i { width: 13px; height: 13px; margin-left: 4px; border: 1px solid #aaa6a2; border-radius: 4px; background: #fff; flex: none; }
.size-grip { width: 12px; height: 12px; margin-left: auto; align-self: flex-end; }
```

FILE: script.js
```js
// Ruler ticks sit every 5 mm; the page grid every 10 mm.
const STEP = 2.36667 * 5;
const ORIGIN_X = 280, ORIGIN_Y = 184.7;
const labels = document.getElementById("ruler-labels");
let ticks = "", grid = "";

function label(text, x, y, vertical) {
  const t = document.createElementNS("http://www.w3.org/2000/svg", "text");
  t.textContent = text;
  if (vertical) {
    t.setAttribute("transform", `translate(${x} ${y}) rotate(-90)`);
    t.setAttribute("text-anchor", "end");
  } else {
    t.setAttribute("x", x);
    t.setAttribute("y", y);
  }
  labels.appendChild(t);
}

for (let k = -18; k <= 60; k++) {
  const x = Math.floor(ORIGIN_X + k * STEP + 0.01) + 0.5;
  const major = k % 10 === 0, mid = k % 5 === 0;
  ticks += `M${x} ${major ? 128 : mid ? 144 : 147}V152`;
  if (major && k < 60) label(k * 5, x + 2, 142);
}
for (let k = -2; k <= 62; k++) {
  const y = Math.floor(ORIGIN_Y + k * STEP) + 0.5;
  const major = k % 10 === 0 || k === -2, mid = k % 5 === 0;
  ticks += `M${major ? 40 : mid ? 56 : 59} ${y}H64`;
  if (major) label(k < 0 ? 0 : k * 5, 54, y + 4, true);
}
for (let k = 1; k < 21; k++) grid += `M${Math.floor(ORIGIN_X + k * STEP * 2 + 0.01) + 0.5} 184V888`;
for (let k = 1; k < 30; k++) grid += `M280 ${Math.floor(ORIGIN_Y + k * STEP * 2) + 0.5}H778`;
document.getElementById("ticks").setAttribute("d", ticks);
document.getElementById("grid").setAttribute("d", grid);

// Buildings along the main road.
const houses = [[680,48],[670,58],[662,66],[650,72],[640,80],[628,92],[620,100],[600,158],[378,312],[376,340],
  [345,374],[412,342],[395,348],[360,400],[368,392],[354,408],[372,404],[330,485],[336,480],[310,560],[325,555],
  [185,620],[178,612],[165,620],[200,622],[225,605],[155,640],[140,650],[95,600],[88,608],[73,628],[245,635],
  [100,640],[112,650],[92,690],[102,690],[85,680],[50,688],[45,692],[145,528],[-68,785],[-30,750],[0,750],
  [220,622],[130,660],[235,258],[338,394],[62,690],[110,670],[158,655]];
document.getElementById("houses").setAttribute("d",
  houses.map(([x, y]) => `M${x - 5} ${y - 2}l7-5 5 8-7 5z`).join(""));
```
